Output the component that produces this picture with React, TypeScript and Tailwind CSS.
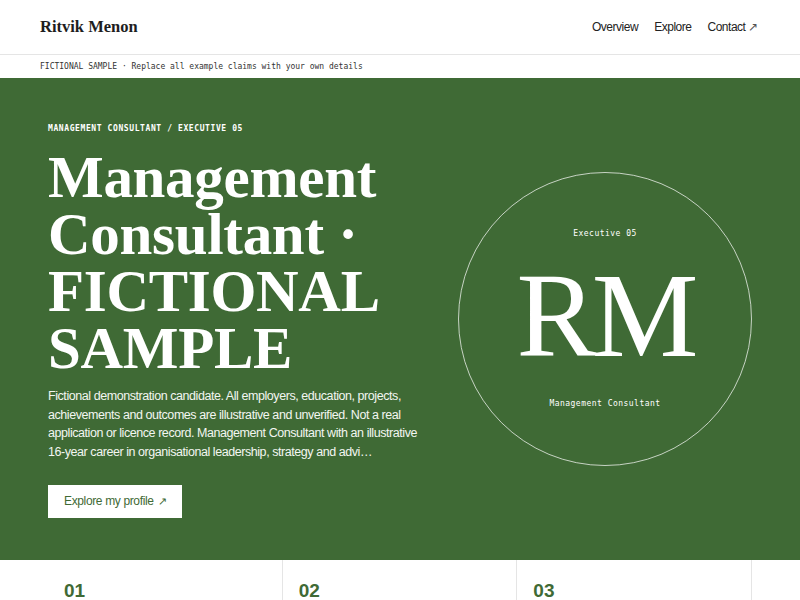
import React from 'react';

const mono = "font-['DejaVu_Sans_Mono','Liberation_Mono',monospace]";
const serif = "font-['Liberation_Serif','DejaVu_Serif',serif]";
const sans = "font-['Liberation_Sans',Arial,sans-serif]";

const NavLink: React.FC<{ label: string; arrow?: boolean }> = ({ label, arrow }) => (
  <a className="text-[12px] tracking-[-0.04em] text-[#222] flex items-center gap-[3px]">
    {label}
    {arrow && <span className="text-[12px] text-[#555]">↗</span>}
  </a>
);

export default function App() {
  return (
    <div className={`w-[800px] h-[600px] overflow-hidden bg-white ${sans}`}>
      <header className="h-[55px] flex items-center justify-between px-10 border-b border-[#e5e5e5]">
        <div className={`${serif} font-bold text-[16.5px] text-[#1e1e1e] pt-[1px]`}>Ritvik Menon</div>
        <nav className="flex items-center gap-4 pr-[2px]">
          <NavLink label="Overview" />
          <NavLink label="Explore" />
          <NavLink label="Contact" arrow />
        </nav>
      </header>

      <div className={`h-[23px] flex items-center px-10 text-[8px] text-[#333] ${mono}`}>
        FICTIONAL SAMPLE · Replace all example claims with your own details
      </div>

      <section className="h-[482px] bg-[#3f6a35] text-white px-12 flex items-center justify-between">
        <div className="w-[372px] self-start pt-[45px]">
          <div className={`${mono} font-bold text-[8px] leading-[12px] tracking-[0.075em]`}>
            MANAGEMENT CONSULTANT / EXECUTIVE 05
          </div>
          <h1 className={`${serif} font-bold text-[59px] leading-[57px] tracking-[-0.005em] mt-[14px]`}>
            Management Consultant · FICTIONAL SAMPLE
          </h1>
          <p className="text-[12.5px] tracking-[-0.035em] leading-[18.7px] mt-[10px] text-[#f3f6f1]">
            Fictional demonstration candidate. All employers, education, projects, achievements and outcomes are illustrative and unverified. Not a real application or licence record. Management Consultant with an illustrative 16-year career in organisational leadership, strategy and advi…
          </p>
          <button className="mt-[23px] bg-white text-[#3f6a35] text-[12px] tracking-[-0.03em] h-[33px] px-4 flex items-center gap-1">
            Explore my profile <span className="text-[11px]">↗</span>
          </button>
        </div>

        <div className="w-[294px] h-[294px] rounded-full border border-white/70 flex flex-col items-center justify-center">
          <div className={`${mono} text-[8px] tracking-[0.06em]`}>Executive 05</div>
          <div className={`${serif} text-[120px] leading-none tracking-[-0.04em] mt-[16px] mb-[22px]`}>RM</div>
          <div className={`${mono} text-[8px] tracking-[0.06em]`}>Management Consultant</div>
        </div>
      </section>

      <div className="mx-12 grid grid-cols-3">
        {['01', '02', '03'].map((n) => (
          <div key={n} className="border-r border-[#e5e5e5] h-[60px] px-4 pt-[20px]">
            <div className="text-[19px] leading-[22px] font-bold text-[#3f6a35]">{n}</div>
          </div>
        ))}
      </div>
    </div>
  );
}
